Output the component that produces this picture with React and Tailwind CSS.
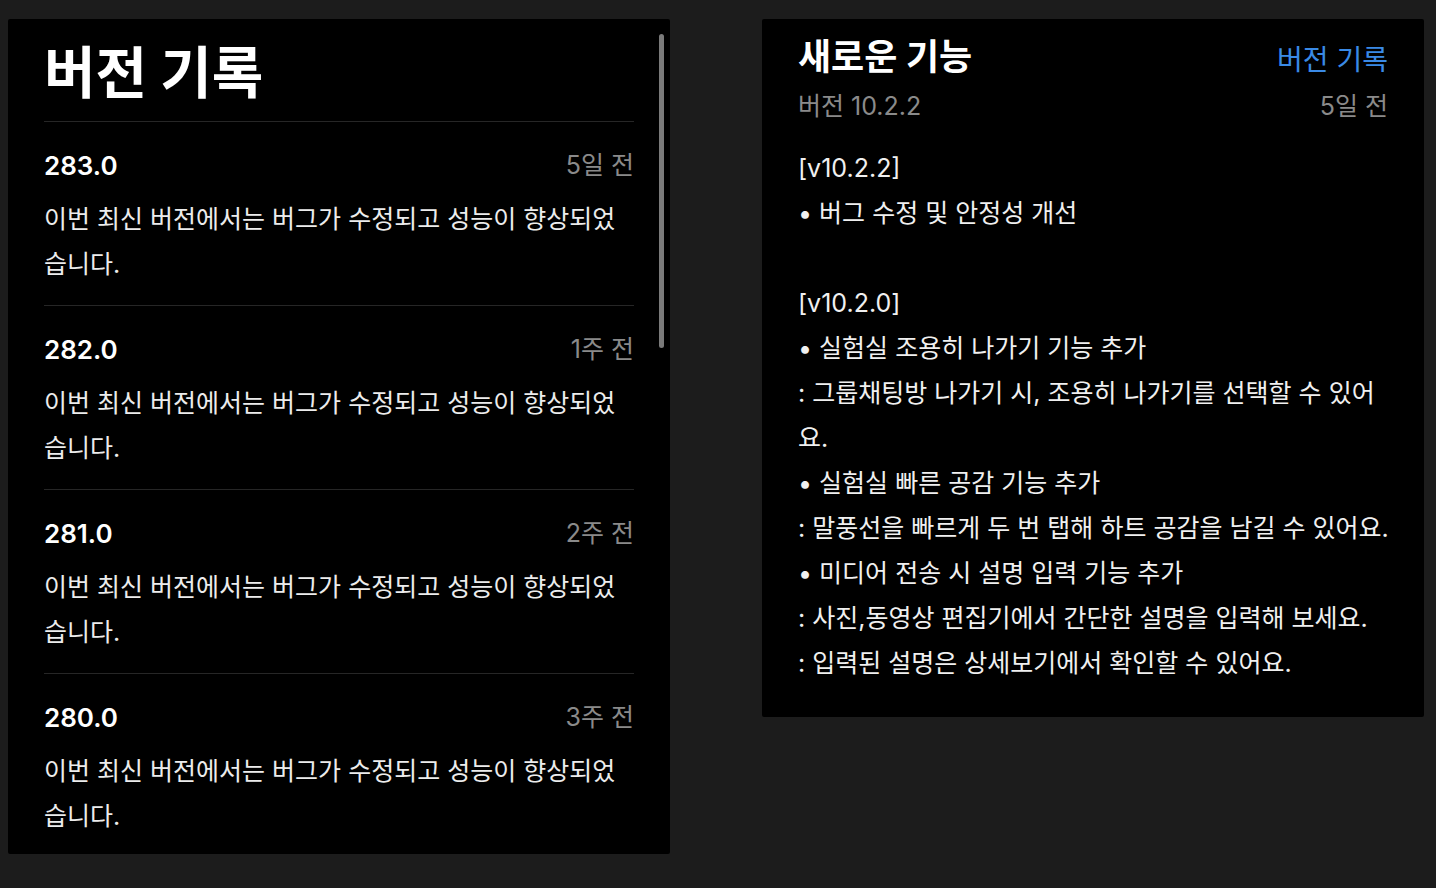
import React from "react";

const versions = [
  { version: "283.0", ago: "5일 전" },
  { version: "282.0", ago: "1주 전" },
  { version: "281.0", ago: "2주 전" },
  { version: "280.0", ago: "3주 전" },
];

const notes = `[v10.2.2]
• 버그 수정 및 안정성 개선

[v10.2.0]
• 실험실 조용히 나가기 기능 추가
: 그룹채팅방 나가기 시, 조용히 나가기를 선택할 수 있어요.
• 실험실 빠른 공감 기능 추가
: 말풍선을 빠르게 두 번 탭해 하트 공감을 남길 수 있어요.
• 미디어 전송 시 설명 입력 기능 추가
: 사진,동영상 편집기에서 간단한 설명을 입력해 보세요.
: 입력된 설명은 상세보기에서 확인할 수 있어요.`;

const VersionRow = ({ item }) => (
  <div className="border-t border-[#262626] pt-[26px] pb-[18px]">
    <div className="flex items-center justify-between h-9">
      <span className="text-[26px] font-semibold text-white -mt-[2px]">{item.version}</span>
      <span className="text-[25px] text-[#8a8a8a]">{item.ago}</span>
    </div>
    <p className="mt-[13px] text-[25px] leading-[45px] text-[#ececec]">
      이번 최신 버전에서는 버그가 수정되고 성능이 향상되었습니다.
    </p>
  </div>
);

export default function App() {
  return (
    <div className="min-h-[888px] bg-[#1c1c1c] pt-[19px] pl-2 flex items-start gap-[92px] font-['Inter','Noto_Sans_CJK_KR',sans-serif]">
      {/* Version history */}
      <div className="relative w-[662px] h-[835px] bg-black rounded-[2px] overflow-hidden">
        <div className="px-9">
          <h1 className="pt-[22px] mb-4 h-[86px] text-[56px] leading-[64px] font-bold text-white">
            버전 기록
          </h1>
          {versions.map((item) => (
            <VersionRow key={item.version} item={item} />
          ))}
        </div>
        {/* scroll thumb */}
        <div className="absolute right-[6px] top-[15px] w-[5px] h-[314px] rounded-full bg-[#7a7a7a]" />
      </div>

      {/* What's new */}
      <div className="w-[662px] bg-black rounded-[2px] pl-9 pr-[34px] pt-4 pb-[31px]">
        <div className="flex items-center justify-between h-11 pr-[2px]">
          <h2 className="text-[36px] font-bold text-white">새로운 기능</h2>
          <button className="mt-[6px] text-[28px] text-[#3a8ae6]">버전 기록</button>
        </div>
        <div className="mt-[10px] flex items-center justify-between h-9 pr-[2px] text-[25px] text-[#8a8a8a]">
          <span>버전 10.2.2</span>
          <span>5일 전</span>
        </div>
        <p className="mt-[21px] whitespace-pre-line text-[25px] leading-[45px] text-[#f0f0f0]">
          {notes}
        </p>
      </div>
    </div>
  );
}
